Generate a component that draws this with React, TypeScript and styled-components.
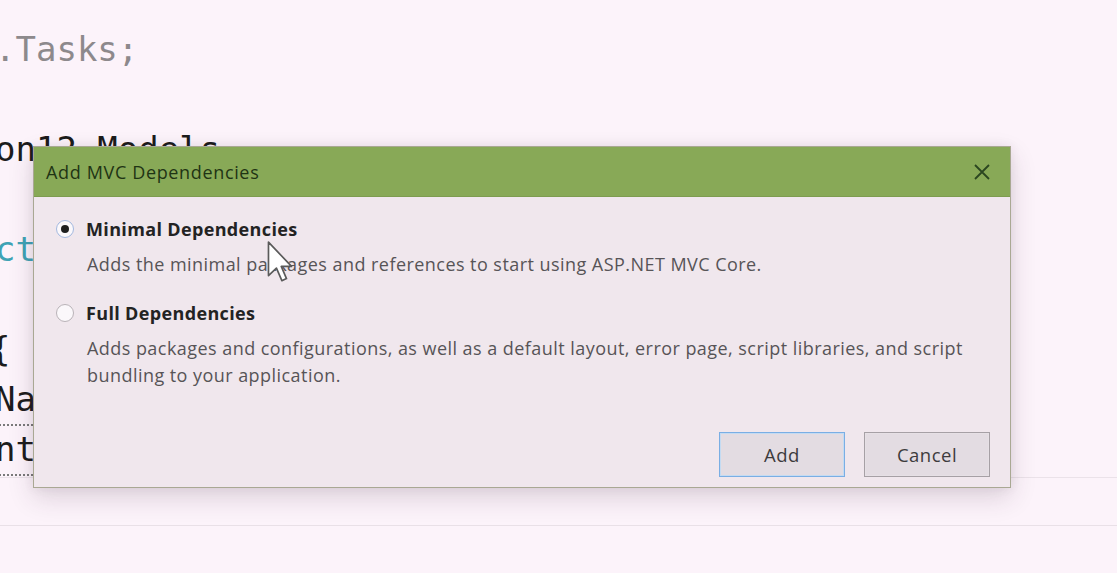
import styled, { createGlobalStyle } from "styled-components";

const GlobalStyle = createGlobalStyle`
  html, body {
    margin: 0;
    padding: 0;
    background: #fcf3fa;
    overflow: hidden;
  }
`;

const Screen = styled.div`
  position: relative;
  width: 1117px;
  height: 573px;
  overflow: hidden;
  background: #fcf3fa;
`;

const Editor = styled.div`
  box-sizing: border-box;
  height: 478px;
  padding-top: 24px;
  border-bottom: 1px solid #ebe2e9;
  font-family: "DejaVu Sans Mono", "Liberation Mono", monospace;
  font-size: 34px;
  line-height: 50px;
  white-space: pre;
`;

const Strip = styled.div`
  height: 47px;
  border-bottom: 1px solid #e9e0e7;
`;

const Code = styled.div<{ $tone?: "muted" | "type"; $shift?: number }>`
  height: 50px;
  margin-left: ${(p) => (p.$shift ?? -5)}px;
  color: ${(p) =>
    p.$tone === "muted" ? "#8d898c" : p.$tone === "type" ? "#3fa3b5" : "#1c1c1c"};
`;

const Squiggle = styled.span`
  text-decoration: underline dotted #7a7a7a;
  text-decoration-thickness: 2px;
  text-underline-offset: 13px;
`;

const Dialog = styled.div`
  position: absolute;
  left: 33px;
  top: 146px;
  width: 978px;
  height: 342px;
  box-sizing: border-box;
  display: flex;
  flex-direction: column;
  background: #f0e7ed;
  border: 1px solid #a9a893;
  box-shadow: 0 10px 24px rgba(60, 40, 60, 0.16), 0 0 10px rgba(60, 40, 60, 0.08);
  font-family: "Open Sans", "Noto Sans", sans-serif;
`;

const TitleBar = styled.div`
  height: 49px;
  display: flex;
  align-items: center;
  justify-content: space-between;
  padding: 0 19px 0 12px;
  background: #88a957;
  border-bottom: 1px solid #7d9c50;
`;

const Title = styled.span`
  font-size: 18px;
  letter-spacing: 0.65px;
  color: #1f3414;
`;

const CloseIcon = styled.svg`
  width: 18px;
  height: 18px;
`;

const Body = styled.div`
  flex: 1;
  display: flex;
  flex-direction: column;
  padding: 20px 20px 10px 22px;
`;

const OptionRow = styled.div<{ $first?: boolean }>`
  display: flex;
  align-items: center;
  height: 24px;
  gap: 12px;
  margin-top: ${(p) => (p.$first ? "0" : "23px")};
`;

const Radio = styled.span<{ $checked?: boolean }>`
  width: 18px;
  height: 18px;
  box-sizing: border-box;
  border-radius: 50%;
  background: #fbf8fb;
  border: 1px solid ${(p) => (p.$checked ? "#a3b9e0" : "#b9b3b8")};
  display: flex;
  align-items: center;
  justify-content: center;
  &::after {
    content: "";
    width: 8px;
    height: 8px;
    border-radius: 50%;
    background: ${(p) => (p.$checked ? "#1e1e1e" : "transparent")};
  }
`;

const Label = styled.span`
  font-size: 18px;
  font-weight: 700;
  letter-spacing: 0.35px;
  color: #232323;
`;

const Description = styled.div`
  margin: 10px 0 0 31px;
  font-size: 18px;
  letter-spacing: 0.45px;
  line-height: 27px;
  color: #575457;
  white-space: nowrap;
`;

const Footer = styled.div`
  margin-top: auto;
  display: flex;
  justify-content: flex-end;
  gap: 19px;
`;

const Button = styled.button<{ $focused?: boolean }>`
  width: 126px;
  height: 45px;
  font-family: inherit;
  font-size: 18.5px;
  letter-spacing: 0.5px;
  color: #3d3b3d;
  background: #e3dce2;
  border: 1px solid ${(p) => (p.$focused ? "#7aaee4" : "#a6a0a5")};
  box-shadow: inset 0 0 0 1px ${(p) => (p.$focused ? "#c4dbf2" : "#e6e0e5")};
  padding: 0;
`;

const Pointer = styled.svg`
  position: absolute;
  left: 266px;
  top: 240px;
  width: 28px;
  height: 44px;
`;

export default function App() {
  return (
    <>
      <GlobalStyle />
      <Screen>
        <Editor>
          <Code $tone="muted">.Tasks;</Code>
          <Code />
          <Code>on12.Models</Code>
          <Code />
          <Code $tone="type">ct</Code>
          <Code />
          <Code $shift={-10}>{"{"}</Code>
          <Code>
            <Squiggle>Name{"  "}</Squiggle>
          </Code>
          <Code>
            <Squiggle>nt{"    "}</Squiggle>
          </Code>
        </Editor>
        <Strip />

        <Dialog>
          <TitleBar>
            <Title>Add MVC Dependencies</Title>
            <CloseIcon viewBox="0 0 18 18">
              <path d="M2 2 L16 16 M16 2 L2 16" stroke="#2b4620" strokeWidth="1.8" fill="none" />
            </CloseIcon>
          </TitleBar>
          <Body>
            <OptionRow $first>
              <Radio $checked />
              <Label>Minimal Dependencies</Label>
            </OptionRow>
            <Description>
              Adds the minimal packages and references to start using ASP.NET MVC Core.
            </Description>
            <OptionRow>
              <Radio />
              <Label>Full Dependencies</Label>
            </OptionRow>
            <Description>
              Adds packages and configurations, as well as a default layout, error page, script
              libraries, and script
              <br />
              bundling to your application.
            </Description>
            <Footer>
              <Button $focused>Add</Button>
              <Button>Cancel</Button>
            </Footer>
          </Body>
        </Dialog>

        <Pointer viewBox="0 0 13 21">
          <path
            d="M1 1 L1 17 L4.8 13.4 L7.4 19.4 L9.6 18.4 L7.1 12.6 L12 12.6 Z"
            fill="#ffffff"
            stroke="#5a5a5a"
            strokeWidth="0.8"
            strokeLinejoin="round"
          />
        </Pointer>
      </Screen>
    </>
  );
}
